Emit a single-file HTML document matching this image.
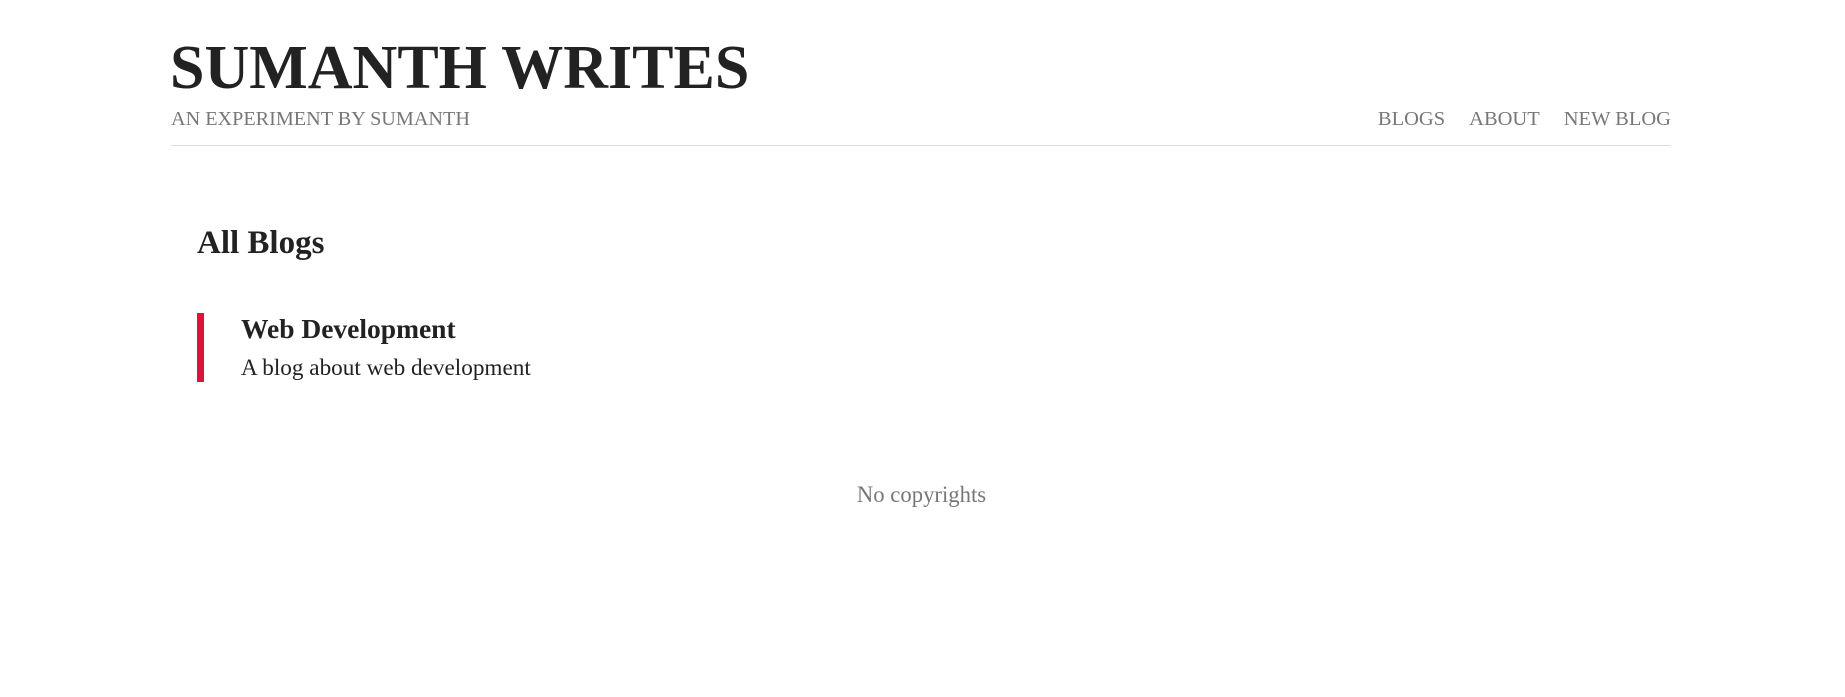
<!DOCTYPE html>
<html><head><meta charset="utf-8"><style>
*{margin:0;padding:0;box-sizing:border-box}
body{width:1845px;height:697px;background:#fff;font-family:"Liberation Serif",serif;position:relative;overflow:hidden}
.a{position:absolute;white-space:nowrap}
.t{left:170px;top:30px;font-size:62px;font-weight:bold;color:#222;line-height:76px}
.s{left:171px;top:107px;font-size:20.2px;color:#777;line-height:24px}
.nav{right:174px;top:107px;font-size:20.5px;color:#777;line-height:24px}
.nav span{margin-left:24px}
.hr{left:171px;top:145px;width:1500px;height:1px;background:#ddd}
.h{left:197px;top:224px;font-size:33px;font-weight:bold;color:#222;line-height:38px}
.bar{left:197px;top:313px;width:7px;height:69px;background:#dc143c}
.bt{left:241px;top:314px;font-size:27.5px;font-weight:bold;color:#222;line-height:30px}
.bd{left:241px;top:355px;font-size:23.2px;color:#222;line-height:26px}
.f{left:0;width:1843px;text-align:center;top:482px;font-size:22.7px;color:#777;line-height:26px}
</style></head><body>
<div class="a t">SUMANTH WRITES</div>
<div class="a s">AN EXPERIMENT BY SUMANTH</div>
<div class="a nav"><span>BLOGS</span><span>ABOUT</span><span>NEW BLOG</span></div>
<div class="a hr"></div>
<div class="a h">All Blogs</div>
<div class="a bar"></div>
<div class="a bt">Web Development</div>
<div class="a bd">A blog about web development</div>
<div class="a f">No copyrights</div>
</body></html>
